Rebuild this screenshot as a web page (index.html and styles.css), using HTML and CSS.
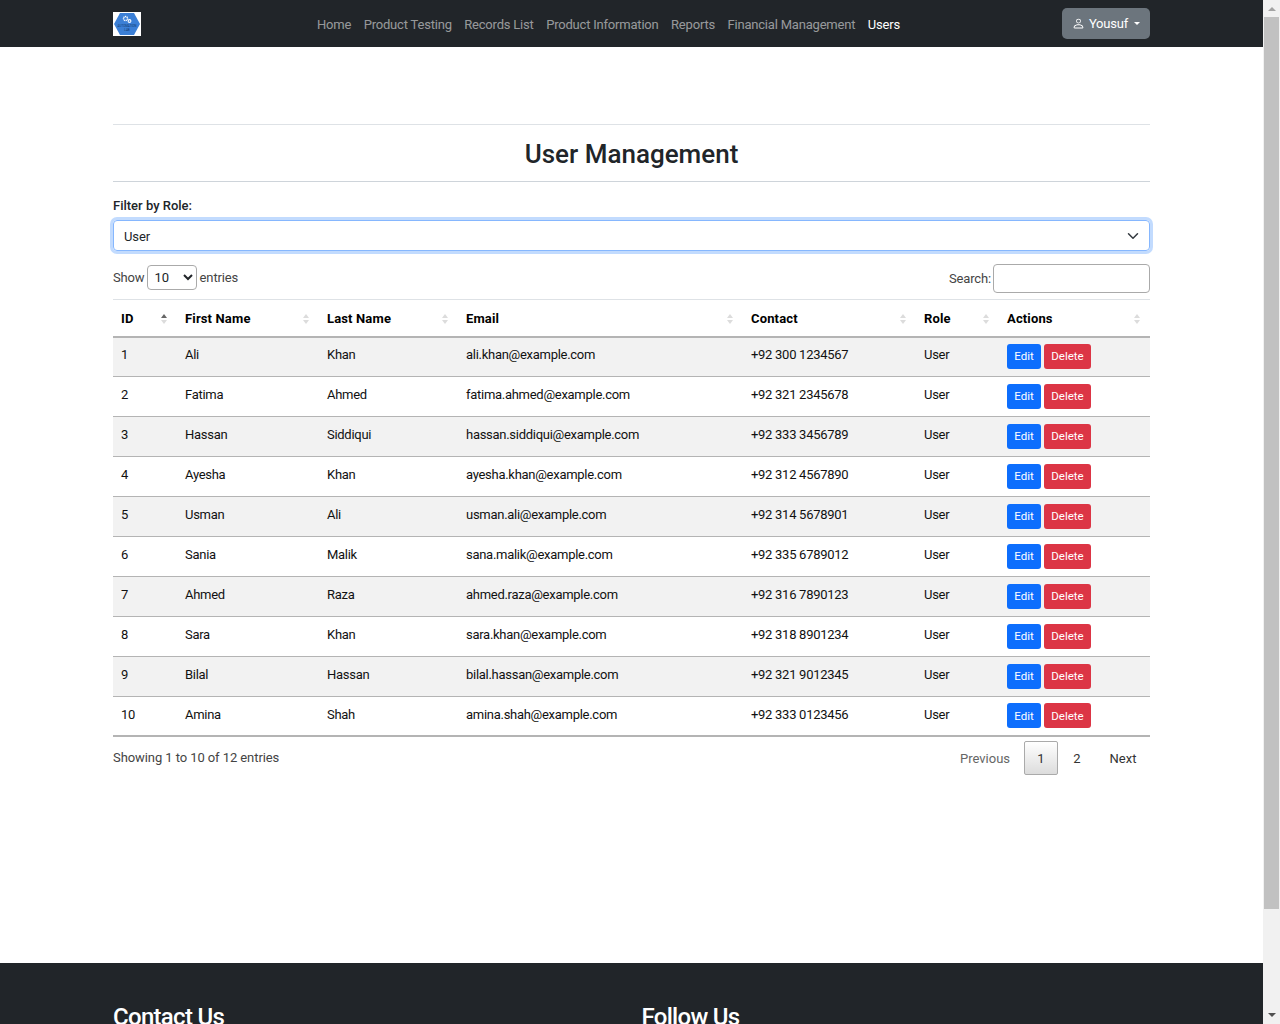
FILE: index.html
```html
<!DOCTYPE html>
<html lang="en">
<head>
  <meta charset="UTF-8" />
  <title>User Management</title>
  <link rel="stylesheet" href="styles.css">
</head>
<body>
  <div class="page">
    <!-- Navbar -->
    <nav class="navbar">
      <svg class="logo" viewBox="0 0 28 24" width="28" height="24">
        <rect width="28" height="24" fill="#fff"/>
        <polygon points="7,1 21,1 27,12 21,23 7,23 1,12" fill="#3b7fd6"/>
        <circle cx="12.5" cy="6.5" r="2" fill="none" stroke="#fff" stroke-width="1.4" stroke-dasharray="1.1 .5"/>
        <circle cx="16.5" cy="9" r="1.4" fill="none" stroke="#fff" stroke-width="1.1"/>
        <text class="logo-text" x="14" y="14.5">AUTOMATION</text>
        <text class="logo-text" x="14" y="19">LAB</text>
      </svg>
      <ul class="nav-links">
        <li><a href="#">Home</a></li>
        <li><a href="#">Product Testing</a></li>
        <li><a href="#">Records List</a></li>
        <li><a href="#">Product Information</a></li>
        <li><a href="#">Reports</a></li>
        <li><a href="#">Financial Management</a></li>
        <li><a href="#" class="active">Users</a></li>
      </ul>
      <button class="user-btn" type="button">
        <svg viewBox="0 0 16 16" width="13" height="13" fill="currentColor">
          <path d="M8 8a3 3 0 1 0 0-6 3 3 0 0 0 0 6zm2-3a2 2 0 1 1-4 0 2 2 0 0 1 4 0zm4 8c0 1-1 1-1 1H3s-1 0-1-1 1-4 6-4 6 3 6 4zm-1-.004c-.001-.246-.154-.986-.832-1.664C11.516 10.68 10.289 10 8 10c-2.29 0-3.516.68-4.168 1.332-.678.678-.83 1.418-.832 1.664h10z"/>
        </svg>
        Yousuf
        <span class="caret"></span>
      </button>
    </nav>

    <main class="content">
      <h2 class="title">User Management</h2>

      <label class="filter-label" for="role-filter">Filter by Role:</label>
      <div class="filter-select" id="role-filter">
        <span class="filter-value">User</span>
        <svg viewBox="0 0 16 16" width="12" height="12"><path d="M2 5l6 6 6-6" fill="none" stroke="#343a40" stroke-width="2" stroke-linecap="round" stroke-linejoin="round"/></svg>
      </div>

      <div class="table-top">
        <div class="length">
          Show
          <select class="length-select"><option>10</option></select>
          entries
        </div>
        <div class="search">
          Search:
          <input type="search" class="search-input">
        </div>
      </div>

      <table class="users">
        <thead>
          <tr>
            <th class="col-id sorted">ID</th>
            <th class="col-first">First Name</th>
            <th class="col-last">Last Name</th>
            <th class="col-email">Email</th>
            <th class="col-contact">Contact</th>
            <th class="col-role">Role</th>
            <th class="col-actions">Actions</th>
          </tr>
        </thead>
        <tbody>
          <tr><td>1</td><td>Ali</td><td>Khan</td><td>ali.khan@example.com</td><td>+92 300 1234567</td><td>User</td><td><button class="btn-edit">Edit</button> <button class="btn-delete">Delete</button></td></tr>
          <tr><td>2</td><td>Fatima</td><td>Ahmed</td><td>fatima.ahmed@example.com</td><td>+92 321 2345678</td><td>User</td><td><button class="btn-edit">Edit</button> <button class="btn-delete">Delete</button></td></tr>
          <tr><td>3</td><td>Hassan</td><td>Siddiqui</td><td>hassan.siddiqui@example.com</td><td>+92 333 3456789</td><td>User</td><td><button class="btn-edit">Edit</button> <button class="btn-delete">Delete</button></td></tr>
          <tr><td>4</td><td>Ayesha</td><td>Khan</td><td>ayesha.khan@example.com</td><td>+92 312 4567890</td><td>User</td><td><button class="btn-edit">Edit</button> <button class="btn-delete">Delete</button></td></tr>
          <tr><td>5</td><td>Usman</td><td>Ali</td><td>usman.ali@example.com</td><td>+92 314 5678901</td><td>User</td><td><button class="btn-edit">Edit</button> <button class="btn-delete">Delete</button></td></tr>
          <tr><td>6</td><td>Sania</td><td>Malik</td><td>sana.malik@example.com</td><td>+92 335 6789012</td><td>User</td><td><button class="btn-edit">Edit</button> <button class="btn-delete">Delete</button></td></tr>
          <tr><td>7</td><td>Ahmed</td><td>Raza</td><td>ahmed.raza@example.com</td><td>+92 316 7890123</td><td>User</td><td><button class="btn-edit">Edit</button> <button class="btn-delete">Delete</button></td></tr>
          <tr><td>8</td><td>Sara</td><td>Khan</td><td>sara.khan@example.com</td><td>+92 318 8901234</td><td>User</td><td><button class="btn-edit">Edit</button> <button class="btn-delete">Delete</button></td></tr>
          <tr><td>9</td><td>Bilal</td><td>Hassan</td><td>bilal.hassan@example.com</td><td>+92 321 9012345</td><td>User</td><td><button class="btn-edit">Edit</button> <button class="btn-delete">Delete</button></td></tr>
          <tr><td>10</td><td>Amina</td><td>Shah</td><td>amina.shah@example.com</td><td>+92 333 0123456</td><td>User</td><td><button class="btn-edit">Edit</button> <button class="btn-delete">Delete</button></td></tr>
        </tbody>
      </table>

      <div class="table-bottom">
        <div class="info">Showing 1 to 10 of 12 entries</div>
        <div class="pager">
          <a href="#" class="page-btn disabled">Previous</a>
          <a href="#" class="page-btn current">1</a>
          <a href="#" class="page-btn">2</a>
          <a href="#" class="page-btn">Next</a>
        </div>
      </div>
    </main>

    <footer class="footer">
      <div class="footer-col"><h3>Contact Us</h3></div>
      <div class="footer-col"><h3>Follow Us</h3></div>
    </footer>
  </div>

  <!-- Scrollbar -->
  <div class="scrollbar">
    <span class="arrow-up"></span>
    <div class="thumb"></div>
    <span class="arrow-down"></span>
  </div>
</body>
</html>
```

FILE: styles.css
```css
:root {
  --dark: #212529;
  --muted: rgba(255, 255, 255, 0.55);
  --line: #dee2e6;
  --blue: #0d6efd;
  --red: #dc3545;
}

* {
  box-sizing: border-box;
}

html, body {
  height: 1024px;
  overflow: hidden;
}

body {
  margin: 0;
  display: flex;
  font-family: Roboto, "Open Sans", sans-serif;
  font-size: 13px;
  color: var(--dark);
  background: #fff;
}

.page {
  flex: 1;
  min-width: 0;
  height: 1024px;
  overflow: hidden;
}

/* Navbar */
.navbar {
  height: 47px;
  background: var(--dark);
  padding: 0 113px;
  display: flex;
  align-items: center;
  letter-spacing: -0.2px;
}

.logo {
  display: block;
  flex: none;
}

.logo-text {
  font-size: 3px;
  fill: #123a70;
  text-anchor: middle;
  letter-spacing: 0;
}

.nav-links {
  list-style: none;
  margin: 0 0 0 176px;
  padding: 1px 0 0;
  display: flex;
  gap: 12.5px;
}

.nav-links a {
  color: var(--muted);
  text-decoration: none;
}

.nav-links a.active {
  color: #fff;
}

.user-btn {
  margin-left: auto;
  width: 88px;
  height: 31px;
  background: #6c757d;
  border: 0;
  border-radius: 5px;
  color: #fff;
  font: inherit;
  letter-spacing: inherit;
  display: flex;
  align-items: center;
  justify-content: center;
  gap: 4px;
}

.caret {
  width: 0;
  height: 0;
  margin-left: 2px;
  border-top: 3px solid #fff;
  border-left: 3px solid transparent;
  border-right: 3px solid transparent;
}

/* Content */
.content {
  height: 916px;
  padding: 77px 113px 0;
}

.title {
  margin: 0;
  height: 58px;
  line-height: 58px;
  border-top: 1px solid var(--line);
  border-bottom: 1px solid #ced4da;
  text-align: center;
  font-size: 26px;
  font-weight: 500;
}

.filter-label {
  display: block;
  margin-top: 14px;
  line-height: 20px;
  font-weight: 500;
}

.filter-select {
  margin-top: 4px;
  height: 31px;
  border: 1px solid #86b7fe;
  border-radius: 4px;
  box-shadow: 0 0 0 3px rgba(13, 110, 253, 0.25);
  padding: 0 10px;
  display: flex;
  align-items: center;
  justify-content: space-between;
}

.filter-value {
  padding-top: 1px;
  letter-spacing: -0.1px;
}

.table-top {
  margin-top: 12px;
  height: 36px;
  padding-bottom: 6px;
  display: flex;
  justify-content: space-between;
  align-items: center;
  color: #444;
  letter-spacing: -0.15px;
}

.length {
  margin-bottom: 1px;
}

.length-select {
  width: 50px;
  height: 25px;
  margin: 0 0 0 -1px;
  border: 1px solid #aaa;
  border-radius: 4px;
  background: #fff;
  font: inherit;
  color: var(--dark);
  padding-left: 3px;
}

.search {
  display: flex;
  align-items: center;
  gap: 2px;
}

.search-input {
  width: 157px;
  height: 29px;
  border: 1px solid #aaa;
  border-radius: 4px;
}

/* Table */
.users {
  width: 100%;
  table-layout: fixed;
  border-collapse: collapse;
}

.users th {
  height: 37px;
  padding: 1px 8px 0;
  text-align: left;
  font-weight: 700;
  letter-spacing: 0.15px;
  color: #000;
  border-top: 1px solid var(--line);
  border-bottom: 2px solid #b4b4b4;
  position: relative;
}

/* sort arrows */
.users th::before,
.users th::after {
  content: "";
  position: absolute;
  right: 10px;
  width: 0;
  height: 0;
  border-left: 3px solid transparent;
  border-right: 3px solid transparent;
}

.users th::before {
  top: 14px;
  border-bottom: 4px solid #dcdcdc;
}

.users th::after {
  top: 20px;
  border-top: 4px solid #dcdcdc;
}

.users th.sorted::before {
  border-bottom-color: #666;
}

.col-id { width: 64px; }
.col-first { width: 142px; }
.col-last { width: 139px; }
.col-email { width: 285px; }
.col-contact { width: 173px; }
.col-role { width: 83px; }

.users td {
  height: 40px;
  padding: 0 8px 4px;
  border-bottom: 1px solid #b4b4b4;
  color: #111;
  letter-spacing: -0.28px;
}

.users tbody tr:nth-child(odd) {
  background: #f2f2f2;
}

.users tbody tr:last-child td {
  height: 39px;
  padding-bottom: 2px;
  border-bottom: 2px solid #b4b4b4;
}

.users td:last-child {
  padding-top: 0;
  padding-bottom: 1px;
  font-size: 0;
  letter-spacing: 0;
}

.users tbody tr:last-child td:last-child {
  padding-bottom: 0;
}

.btn-edit, .btn-delete {
  height: 25px;
  border: 0;
  border-radius: 3px;
  color: #fff;
  font-family: inherit;
  font-size: 11.5px;
  padding: 0;
}

.btn-edit {
  width: 34px;
  background: var(--blue);
  margin-right: 3px;
}

.btn-delete {
  width: 47px;
  background: var(--red);
}

.table-bottom {
  display: flex;
  justify-content: space-between;
  align-items: flex-start;
  padding-top: 4px;
}

.info {
  margin-top: 7px;
  line-height: 20px;
  color: #444;
  letter-spacing: -0.08px;
}

.pager {
  display: flex;
  align-items: center;
}

.page-btn {
  height: 34px;
  line-height: 34px;
  text-align: center;
  color: #333;
  text-decoration: none;
  border: 1px solid transparent;
}

.page-btn.disabled {
  width: 78px;
  color: #666;
}

.page-btn.current {
  width: 34px;
  border: 1px solid #aaa;
  border-radius: 2px;
  background: linear-gradient(to bottom, #fff, #dcdcdc);
}

.page-btn:nth-child(3) {
  width: 38px;
}

.page-btn:nth-child(4) {
  width: 54px;
}

/* Footer */
.footer {
  height: 61px;
  background: var(--dark);
  padding: 38px 113px 0;
  display: grid;
  grid-template-columns: 528.5px 1fr;
  color: #fff;
  overflow: hidden;
}

.footer h3 {
  margin: 0;
  font-size: 24px;
  font-weight: 500;
  line-height: 32px;
  letter-spacing: -0.7px;
}

/* Scrollbar */
.scrollbar {
  width: 17px;
  flex: none;
  height: 1024px;
  background: #f1f1f1;
  display: flex;
  flex-direction: column;
  align-items: center;
}

.arrow-up {
  margin-top: 7px;
  width: 0;
  height: 0;
  border-left: 4px solid transparent;
  border-right: 4px solid transparent;
  border-bottom: 4px solid #a3a3a3;
}

.thumb {
  margin-top: 6px;
  width: 15px;
  height: 892px;
  background: #c1c1c1;
}

.arrow-down {
  margin-top: auto;
  margin-bottom: 7px;
  width: 0;
  height: 0;
  border-left: 4px solid transparent;
  border-right: 4px solid transparent;
  border-top: 4px solid #505050;
}
```
